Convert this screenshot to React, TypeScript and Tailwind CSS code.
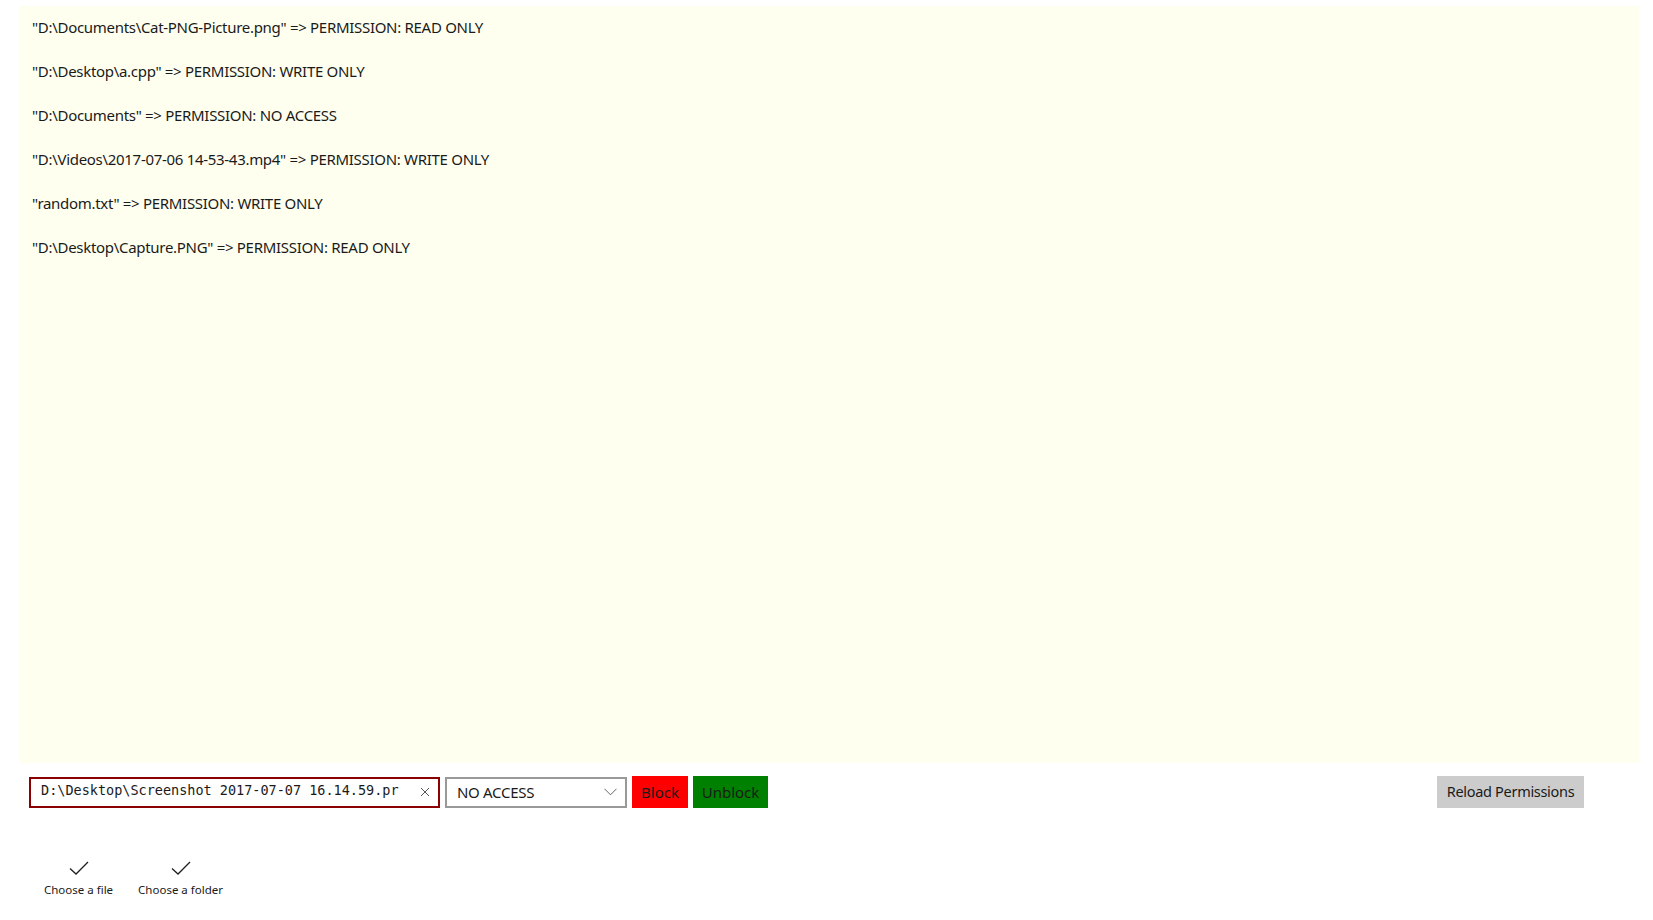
import React from "react";

const entries = [
  { path: "D:\\Documents\\Cat-PNG-Picture.png", perm: "READ ONLY" },
  { path: "D:\\Desktop\\a.cpp", perm: "WRITE ONLY" },
  { path: "D:\\Documents", perm: "NO ACCESS" },
  { path: "D:\\Videos\\2017-07-06 14-53-43.mp4", perm: "WRITE ONLY" },
  { path: "random.txt", perm: "WRITE ONLY" },
  { path: "D:\\Desktop\\Capture.PNG", perm: "READ ONLY" },
];

function Check() {
  return (
    <svg width="22" height="16" viewBox="0 0 22 16" fill="none">
      <path d="M2 8.5L8 14L20 2" stroke="#1f1f1f" strokeWidth="1.3" />
    </svg>
  );
}

export default function App() {
  return (
    <div
      className="w-[1653px] h-[920px] bg-white text-[#1a1a1a] flex flex-col"
      style={{ fontFamily: "'Noto Sans', 'Open Sans', sans-serif" }}
    >
      {/* permission list */}
      <div className="ml-[19px] mr-[14px] mt-[6px] h-[757px] bg-[#fffff0] pt-[10px] pl-[13px] flex flex-col">
        {entries.map((e, i) => (
          <div key={i} className="h-[44px] text-[15px] leading-[22px] tracking-[-0.3px]">
            "{e.path}" =&gt; PERMISSION: {e.perm}
          </div>
        ))}
      </div>

      {/* controls */}
      <div className="mt-[13px] flex items-center pl-[29px] pr-[69px] h-[32px]">
        <div className="w-[411px] h-[31px] border-2 border-[#8b0000] bg-white flex items-center pl-[10px] pr-[8px] pb-[3px]">
          <span
            className="flex-1 overflow-hidden whitespace-nowrap text-[13.5px]"
            style={{ fontFamily: "'DejaVu Sans Mono', 'Liberation Mono', monospace" }}
          >
            D:\Desktop\Screenshot 2017-07-07 16.14.59.pr
          </span>
          <span className="ml-[8px] pt-[3px] text-[#555]">
            <svg width="10" height="10" viewBox="0 0 10 10">
              <path d="M1 1L9 9M9 1L1 9" stroke="#555" strokeWidth="1" />
            </svg>
          </span>
        </div>
        <div className="ml-[5px] w-[182px] h-[31px] border-2 border-[#999999] bg-white flex items-center pl-[10px] pr-[8px] text-[15px]">
          <span className="flex-1 tracking-[-0.3px]">NO ACCESS</span>
          <svg width="13" height="8" viewBox="0 0 13 8" fill="none">
            <path d="M0.5 0.8L6.5 6.8L12.5 0.8" stroke="#666" strokeWidth="1" />
          </svg>
        </div>
        <button className="ml-[5px] w-[56px] h-[32px] bg-[#ff0000] text-[15px] text-[#1a1a1a]">Block</button>
        <button className="ml-[5px] w-[75px] h-[32px] bg-[#008000] text-[15px] text-[#1a1a1a]">Unblock</button>
        <div className="flex-1" />
        <button className="w-[147px] h-[32px] bg-[#cccccc] text-[14.5px] tracking-[-0.3px] text-[#1a1a1a]">
          Reload Permissions
        </button>
      </div>

      {/* app bar */}
      <div className="mt-[52px] flex pl-[44px] gap-[25px]">
        <div className="flex flex-col items-center">
          <Check />
          <span className="mt-[6px] text-[11.5px] leading-[16px]">Choose a file</span>
        </div>
        <div className="flex flex-col items-center">
          <Check />
          <span className="mt-[6px] text-[11.5px] leading-[16px]">Choose a folder</span>
        </div>
      </div>
    </div>
  );
}
